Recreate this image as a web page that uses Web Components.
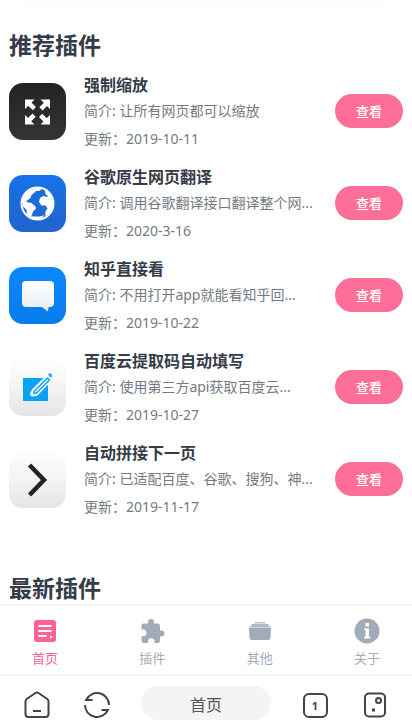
<!DOCTYPE html>
<html lang="zh-CN">
<head>
<meta charset="utf-8">
<meta name="viewport" content="width=device-width, initial-scale=1">
<title>推荐插件</title>
<style>
body { margin: 0; background: #fff; color: #353b48; font-family: "Noto Sans", "Noto Sans CJK SC", sans-serif; }
</style>
</head>
<body>
<app-screen>
  <plugin-section heading="推荐插件">
    <plugin-item name="强制缩放" intro="让所有网页都可以缩放" date="2019-10-11">
      <svg slot="icon" viewBox="0 0 57 57" aria-hidden="true">
        <defs><linearGradient id="g1" x2="0" y2="1"><stop stop-color="#232323"/><stop offset="1" stop-color="#343434"/></linearGradient></defs>
        <rect width="57" height="57" rx="14" fill="url(#g1)"/>
        <g fill="#fff">
          <path id="arr" d="M16 16.500h9.500l-3 3 4.500 4.500-3.200 3.200-4.500-4.500-3.300 3.300z"/>
          <use href="#arr" transform="rotate(90 28.500 29)"/>
          <use href="#arr" transform="rotate(180 28.500 29)"/>
          <use href="#arr" transform="rotate(270 28.500 29)"/>
        </g>
      </svg>
    </plugin-item>
    <plugin-item name="谷歌原生网页翻译" intro="调用谷歌翻译接口翻译整个网..." date="2020-3-16">
      <svg slot="icon" viewBox="0 0 57 57" aria-hidden="true">
        <defs><linearGradient id="g2" x2="0" y2="1"><stop stop-color="#1473e8"/><stop offset="1" stop-color="#2463cb"/></linearGradient></defs>
        <rect width="57" height="57" rx="14" fill="url(#g2)"/>
        <circle cx="28.500" cy="28.500" r="16" fill="none" stroke="#fff" stroke-width="2"/>
        <path fill="#fff" d="M13 26c1-5 4-9 9-11l7-2.500 4 1.500-3 2-3 0-2 2-2.500 2-1 3-4 3 0 1 5 1 4 3.500 .5 2-3 3-1 3.500-2 2.500-3-3.500-.5-4-3.500-3.500z"/>
        <path fill="#fff" d="M36 15c5 2 8.500 7 8.500 13l-1.500 7-4 4.500-3 1 .5-4 2-3-2-3-4 0-2.500-3.500 1-4 3.500-2 3.500 1 1-1-2.500-2z"/>
        <path fill="#fff" d="M20 41l5 .5 6 0 5-1.500-5 4-5 0z"/>
      </svg>
    </plugin-item>
    <plugin-item name="知乎直接看" intro="不用打开app就能看知乎回..." date="2019-10-22">
      <svg slot="icon" viewBox="0 0 57 57" aria-hidden="true">
        <defs>
          <linearGradient id="g3" x2="0" y2="1"><stop stop-color="#0c88fb"/><stop offset="1" stop-color="#087ceb"/></linearGradient>
          <linearGradient id="g3b" x2="0" y2="1"><stop stop-color="#fff"/><stop offset="1" stop-color="#e9eef3"/></linearGradient>
        </defs>
        <rect width="57" height="57" rx="14" fill="url(#g3)"/>
        <path fill="url(#g3b)" d="M17 14h24q4 0 4 4v18q0 4-4 4h-1.500l-.5 4.500-6-4.500H17q-4 0-4-4V18q0-4 4-4z"/>
      </svg>
    </plugin-item>
    <plugin-item name="百度云提取码自动填写" intro="使用第三方api获取百度云..." date="2019-10-27">
      <svg slot="icon" viewBox="0 0 57 57" aria-hidden="true">
        <defs><linearGradient id="g4" x2="0" y2="1"><stop stop-color="#fefefe"/><stop offset=".4" stop-color="#f6f6f6"/><stop offset="1" stop-color="#e5e5e5"/></linearGradient></defs>
        <rect width="57" height="57" rx="14" fill="url(#g4)"/>
        <path fill="#0aa3f3" d="M14 19h25v23H14z"/>
        <path d="M25 32L38 19l2 2-13 13.500-3.500.5z" fill="#0aa3f3" stroke="#f8fbfd" stroke-width="5" stroke-linejoin="round"/>
        <path d="M25.500 32L38.500 19l2 2-13 13-2.500.5z" fill="#f8fbfd" stroke="#0aa3f3" stroke-width="1.500" stroke-linejoin="round"/>
        <path fill="#1aa5ed" d="M39 15.500l1.500-1q1-.5 1.700.5l.8 1q.5 1-.3 1.700l-1 1z"/>
      </svg>
    </plugin-item>
    <plugin-item name="自动拼接下一页" intro="已适配百度、谷歌、搜狗、神..." date="2019-11-17">
      <svg slot="icon" viewBox="0 0 57 57" aria-hidden="true">
        <defs><linearGradient id="g5" x2="0" y2="1"><stop stop-color="#fefefe"/><stop offset=".4" stop-color="#f6f6f6"/><stop offset="1" stop-color="#e5e5e5"/></linearGradient></defs>
        <rect width="57" height="57" rx="14" fill="url(#g5)"/>
        <path d="M20.500 14L35 29 20.500 44" fill="none" stroke="#232323" stroke-width="4.500"/>
      </svg>
    </plugin-item>
  </plugin-section>
  <plugin-section heading="最新插件"></plugin-section>

  <tab-bar slot="tabs">
    <tab-link label="首页" active>
      <svg viewBox="0 0 26 26" aria-hidden="true"><path fill="currentColor" fill-rule="evenodd" d="M5 2h16q3 0 3 3v16q0 3-3 3H5q-3 0-3-3V5q0-3 3-3zM6.500 7v2h13V7zM6.500 12v2h13v-2zM6.500 17v2h8v-2zM18 21l3-3h-3z"/></svg>
    </tab-link>
    <tab-link label="插件">
      <svg viewBox="0 0 26 26" aria-hidden="true"><path fill="currentColor" d="M21.500 12H20V7.500Q20 5 17.500 5H14V3.500a3 3 0 0 0-6 0V5H4Q1.500 5 1.500 7.500V11H3a3.400 3.400 0 0 1 0 6.800H1.500V22q0 2.500 2.500 2.500h4V23a3.300 3.300 0 0 1 6.600 0v1.500h3Q20 24.500 20 22v-4h1.500a3 3 0 0 0 0-6z" transform="translate(1 .500)"/></svg>
    </tab-link>
    <tab-link label="其他">
      <svg viewBox="0 0 26 26" aria-hidden="true"><g fill="currentColor"><path d="M8 4h10l1 1.500H7z" opacity=".75"/><path d="M5 6h16l2 3H3z" opacity=".85"/><path d="M2 9.500h22L23.500 20q0 2-2 2h-17q-2 0-2-2z"/></g></svg>
    </tab-link>
    <tab-link label="关于">
      <svg viewBox="0 0 26 26" aria-hidden="true"><circle cx="13" cy="13" r="12.500" fill="currentColor"/><path fill="#fff" d="M11.500 5h3.500v3.500h-3.500zM10 10.500h5V19h1.500v1.500H10V19h1.500v-7H10z"/></svg>
    </tab-link>
  </tab-bar>
  <browser-bar slot="browser" page="首页" count="1"></browser-bar>
</app-screen>

<script>
class Base extends HTMLElement {
  connectedCallback() {
    if (this.shadowRoot) return;
    this.attachShadow({ mode: "open" }).innerHTML = this.render();
  }
  attr(name) { return this.getAttribute(name) || ""; }
}

customElements.define("app-screen", class extends Base {
  render() {
    return `<style>
      :host { display: grid; grid-template-rows: minmax(0, 1fr) auto auto; height: 100vh; }
      main { display: flex; flex-direction: column; gap: 53px; overflow: hidden; padding: 0 9px; }
      hr { width: 92%; height: 1px; margin: 4px auto -29px; border: 0; flex: none; background: #f8f8f8; }
    </style>
    <main><hr><slot></slot></main>
    <slot name="tabs"></slot>
    <slot name="browser"></slot>`;
  }
});

customElements.define("plugin-section", class extends Base {
  render() {
    return `<style>
      :host { display: block; flex: none; }
      h2 { margin: 0; font-size: 23px; line-height: 32px; font-weight: 700; }
      .list { display: flex; flex-direction: column; gap: 12px; padding-top: 10px; }
    </style>
    <section><h2>${this.attr("heading")}</h2><div class="list"><slot></slot></div></section>`;
  }
});

customElements.define("plugin-item", class extends Base {
  render() {
    return `<style>
      :host { display: block; }
      article { display: flex; align-items: center; gap: 18px; }
      ::slotted(svg) { display: block; width: 57px; height: 57px; flex: none; }
      .text { flex: 1; min-width: 0; white-space: nowrap; }
      h3, p { margin: 0; }
      h3 { font-size: 16px; line-height: 28px; font-weight: 700; }
      p { font-size: 14px; line-height: 24px; color: #747a83; }
      p + p { margin-top: 4px; }
      button { flex: none; width: 68px; height: 34px; padding: 0; border: 0; border-radius: 17px;
        background: #fd6f98; color: #fff; font: 500 13px/34px "Noto Sans CJK SC", sans-serif; }
    </style>
    <article>
      <slot name="icon"></slot>
      <div class="text">
        <h3>${this.attr("name")}</h3>
        <p>简介: ${this.attr("intro")}</p>
        <p>更新：<time>${this.attr("date")}</time></p>
      </div>
      <button type="button">查看</button>
    </article>`;
  }
});

customElements.define("tab-bar", class extends Base {
  render() {
    return `<style>
      :host { display: block; background: #fff; border-top: 2px solid #f5f5f5; border-bottom: 2px solid #f5f5f5; }
      nav { display: flex; justify-content: space-between; padding: 12px 32px 6px; }
    </style>
    <nav><slot></slot></nav>`;
  }
});

customElements.define("tab-link", class extends Base {
  render() {
    return `<style>
      :host { display: block; color: #a2abb9; }
      :host([active]) { color: #fb6492; }
      a { display: flex; flex-direction: column; align-items: center; gap: 4px; color: inherit; text-decoration: none;
        font-size: 13px; line-height: 20px; }
      ::slotted(svg) { display: block; width: 26px; height: 26px; }
    </style>
    <a href="#"><slot></slot><span>${this.attr("label")}</span></a>`;
  }
});

customElements.define("browser-bar", class extends Base {
  render() {
    return `<style>
      :host { display: block; background: #fff; color: #444; }
      .bar { display: flex; align-items: center; justify-content: space-between; padding: 10px 22px 0; }
      .pair { display: flex; gap: 30px; }
      button { display: grid; place-items: center; width: 30px; height: 34px; padding: 4px 0 0; border: 0;
        background: none; color: inherit; font-family: inherit; }
      svg { display: block; width: 28px; height: 28px; fill: none; stroke: currentColor; stroke-width: 2; }
      .page { width: 130px; padding: 4px 0 0; border-radius: 17px; background: #f4f4f4; color: #555; font-size: 16px; line-height: 24px; }
      .count { box-sizing: border-box; width: 25px; height: 25px; border: 2px solid; border-radius: 6px;
        font-size: 11px; line-height: 21px; font-weight: 700; }
    </style>
    <div class="bar">
      <div class="pair">
        <button type="button" aria-label="主页"><svg viewBox="0 0 28 28"><path d="M2.500 10.500Q2.500 9 3.700 8L12.500 2Q14 1 15.500 2L24.300 8Q25.500 9 25.500 10.500V23q0 3-3 3h-17q-3 0-3-3zM10 20h8"/></svg></button>
        <button type="button" aria-label="刷新"><svg viewBox="0 0 28 28"><path d="M9.500 9H3.100A12 12 0 0 1 26 14M18.500 19H24.900A12 12 0 0 1 2 14"/></svg></button>
      </div>
      <button type="button" class="page">${this.attr("page")}</button>
      <div class="pair">
        <button type="button" aria-label="标签页 ${this.attr("count")}"><span class="count">${this.attr("count")}</span></button>
        <button type="button" aria-label="菜单"><svg viewBox="0 0 28 28"><rect x="4" y="2.500" width="20" height="23" rx="4"/><circle cx="17.500" cy="9.500" r="2.500"/><path d="M11 19h3" stroke-width="3"/></svg></button>
      </div>
    </div>`;
  }
});
</script>
</body>
</html>
